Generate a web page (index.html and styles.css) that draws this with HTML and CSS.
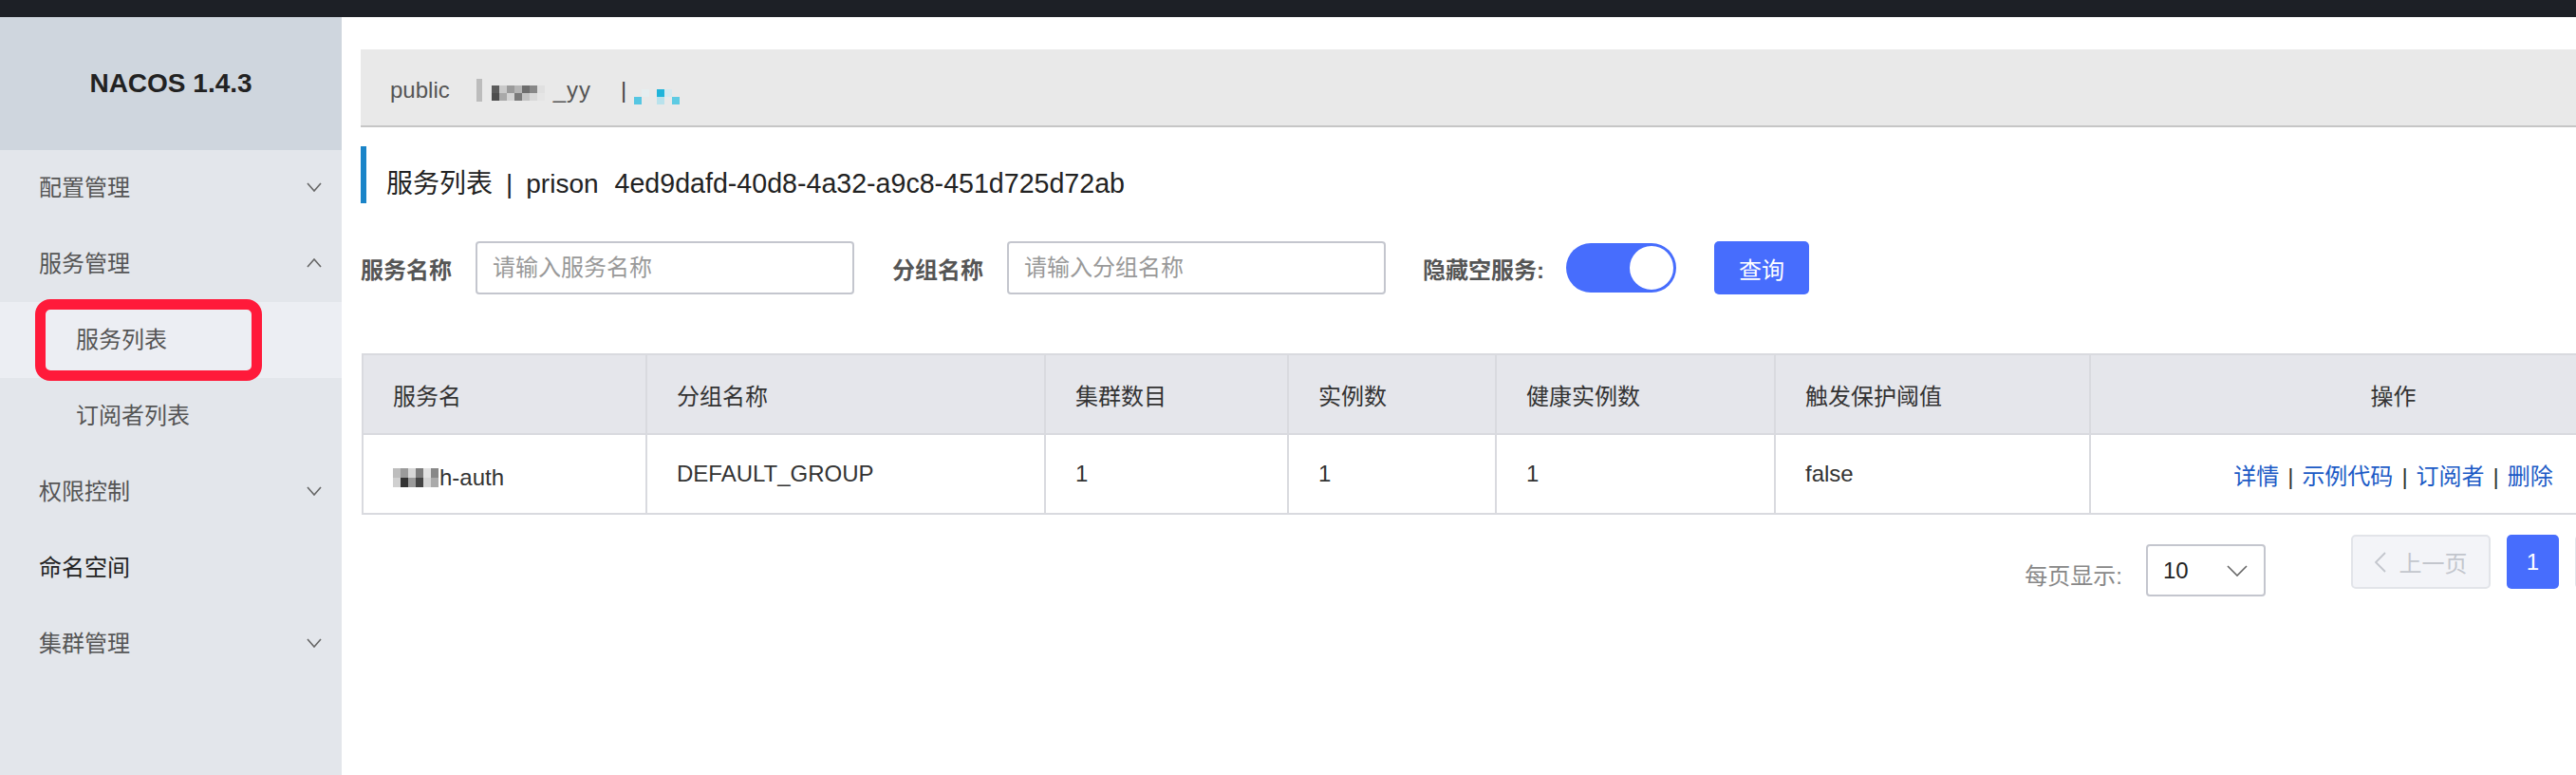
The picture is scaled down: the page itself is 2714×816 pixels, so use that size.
FILE: index.html
```html
<!DOCTYPE html>
<html lang="zh-CN">
<head>
    <meta charset="UTF-8">
    <title>Nacos - 服务列表</title>
    <link rel="stylesheet" href="styles.css">
</head>
<body>
    <div class="topbar"></div>

    <div class="layout">
        <!-- Sidebar -->
        <div class="sidebar">
            <div class="logo">NACOS 1.4.3</div>
            <div class="menu-item">配置管理
                <svg class="chev" width="16" height="10" viewBox="0 0 16 10"><path d="M1 1 L8 9 L15 1" fill="none" stroke="#666" stroke-width="1.6"/></svg>
            </div>
            <div class="menu-item">服务管理
                <svg class="chev" width="16" height="10" viewBox="0 0 16 10"><path d="M1 9 L8 1 L15 9" fill="none" stroke="#666" stroke-width="1.6"/></svg>
            </div>
            <div class="menu-item sub active">服务列表
                <div class="mark"></div>
            </div>
            <div class="menu-item sub">订阅者列表</div>
            <div class="menu-item">权限控制
                <svg class="chev" width="16" height="10" viewBox="0 0 16 10"><path d="M1 1 L8 9 L15 1" fill="none" stroke="#666" stroke-width="1.6"/></svg>
            </div>
            <div class="menu-item leaf">命名空间</div>
            <div class="menu-item">集群管理
                <svg class="chev" width="16" height="10" viewBox="0 0 16 10"><path d="M1 1 L8 9 L15 1" fill="none" stroke="#666" stroke-width="1.6"/></svg>
            </div>
        </div>

        <!-- Main -->
        <div class="main">
            <div class="content">
                <div class="crumbs">
                    <span>public</span>
                    <span class="blur">
                        <i class="pipe"></i>
                        <span class="pix">
                            <i style="background:#5c5c5c"></i><i style="background:#c9c9c9"></i><i style="background:#9a9a9a"></i><i style="background:#b5b5b5"></i><i style="background:#6d6d6d"></i><i style="background:#888"></i><i style="background:#e0e0e0"></i>
                            <i style="background:#4f4f4f"></i><i style="background:#a9a9a9"></i><i style="background:#d4d4d4"></i><i style="background:#7a7a7a"></i><i style="background:#c2c2c2"></i><i style="background:#d9d9d9"></i><i style="background:#e5e5e5"></i>
                        </span>
                        <span class="yy">_yy</span>
                    </span>
                    <span class="bar">|</span>
                    <span class="pix cyan">
                        <i style="background:#e9e9e9"></i><i style="background:#e6eef0"></i><i style="background:#e9e9e9"></i><i style="background:#1fb4da"></i><i style="background:#d5eaf0"></i><i style="background:#e9e9e9"></i>
                        <i style="background:#56c6e2"></i><i style="background:#e9e9e9"></i><i style="background:#e9e9e9"></i><i style="background:#b9e2ec"></i><i style="background:#e9e9e9"></i><i style="background:#5ecbe3"></i>
                    </span>
                </div>

                <h2 class="page-title">服务列表<span class="sep">|</span>prison<span class="ns">4ed9dafd-40d8-4a32-a9c8-451d725d72ab</span></h2>

                <div class="search">
                    <label class="field-label">服务名称</label>
                    <input class="field" placeholder="请输入服务名称">
                    <label class="field-label second">分组名称</label>
                    <input class="field" placeholder="请输入分组名称">
                    <label class="field-label third">隐藏空服务:</label>
                    <div class="switch"><div class="knob"></div></div>
                    <button class="btn-primary">查询</button>
                    <button class="btn-create" title="创建服务"></button>
                </div>

                <table class="services">
                    <colgroup>
                        <col style="width:299px">
                        <col style="width:420px">
                        <col style="width:256px">
                        <col style="width:219px">
                        <col style="width:294px">
                        <col style="width:332px">
                        <col>
                    </colgroup>
                    <thead>
                        <tr>
                            <th>服务名</th>
                            <th>分组名称</th>
                            <th>集群数目</th>
                            <th>实例数</th>
                            <th>健康实例数</th>
                            <th>触发保护阈值</th>
                            <th class="center">操作</th>
                        </tr>
                    </thead>
                    <tbody>
                        <tr>
                            <td>
                                <span class="svc">
                                    <span class="pix name">
                                        <i style="background:#bdbdbd"></i><i style="background:#9b9b9b"></i><i style="background:#d7d7d7"></i><i style="background:#7d7d7d"></i><i style="background:#e2e2e2"></i><i style="background:#888"></i>
                                        <i style="background:#d0d0d0"></i><i style="background:#333"></i><i style="background:#9a9a9a"></i><i style="background:#444"></i><i style="background:#d5d5d5"></i><i style="background:#aaa"></i>
                                    </span>h-auth
                                </span>
                            </td>
                            <td>DEFAULT_GROUP</td>
                            <td>1</td>
                            <td>1</td>
                            <td>1</td>
                            <td>false</td>
                            <td class="center actions">
                                <a>详情</a><span class="div">|</span><a>示例代码</a><span class="div">|</span><a>订阅者</a><span class="div">|</span><a>删除</a>
                            </td>
                        </tr>
                    </tbody>
                </table>

                <div class="pager">
                    <span class="page-size-label">每页显示:</span>
                    <div class="select">10
                        <svg width="22" height="12" viewBox="0 0 22 12"><path d="M1 1 L11 11 L21 1" fill="none" stroke="#666" stroke-width="1.6"/></svg>
                    </div>
                    <button class="page-btn prev">
                        <svg width="12" height="22" viewBox="0 0 12 22"><path d="M11 1 L1 11 L11 21" fill="none" stroke="#c3c6cd" stroke-width="1.8"/></svg>
                        上一页
                    </button>
                    <button class="page-btn current">1</button>
                    <button class="page-btn next" title="下一页"></button>
                </div>
            </div>
        </div>
    </div>
</body>
</html>
```

FILE: styles.css
```css
html, body {
    margin: 0;
    padding: 0;
    overflow: hidden;
}

body {
    width: 2714px;
    height: 816px;
    font-family: "Liberation Sans", "Noto Sans CJK SC", sans-serif;
    color: #333;
    background: #fff;
}

.topbar {
    height: 18px;
    background: #1d2026;
}

.layout {
    display: flex;
    height: 798px;
    overflow: hidden;
}

/* Sidebar */
.sidebar {
    width: 360px;
    flex: none;
    background: #e3e6eb;
}

.logo {
    height: 140px;
    background: #cfd6de;
    display: flex;
    align-items: center;
    justify-content: center;
    font-size: 28px;
    font-weight: bold;
    color: #222;
}

.menu-item {
    position: relative;
    height: 80px;
    box-sizing: border-box;
    display: flex;
    align-items: center;
    padding: 0 21px 6px 41px;
    font-size: 24px;
    color: #555;
}

.menu-item .chev {
    margin-left: auto;
    margin-top: 4px;
}

.menu-item.sub {
    padding-left: 80px;
}

.menu-item.leaf {
    color: #222;
}

.menu-item.active {
    background: #eceef3;
}

.mark {
    position: absolute;
    left: 37px;
    top: -3px;
    width: 239px;
    height: 86px;
    box-sizing: border-box;
    border: 11px solid #ff1a3a;
    border-radius: 16px;
}

/* Main */
.main {
    flex: none;
    width: 2500px;
    padding: 34px 0 0 20px;
}

.content {
    width: 2462px;
}

.crumbs {
    height: 82px;
    box-sizing: border-box;
    padding: 6px 0 0 31px;
    background: #e9e9e9;
    border-bottom: 2px solid #c6c6c6;
    display: flex;
    align-items: center;
    font-size: 24px;
    color: #555;
}

.blur {
    display: flex;
    align-items: center;
    margin-left: 28px;
}

.blur .pipe {
    display: block;
    width: 6px;
    height: 24px;
    background: #bcbcbc;
    margin-right: 10px;
}

.blur .yy {
    margin-left: 9px;
    letter-spacing: 1px;
}

.pix {
    display: inline-grid;
    grid-template-columns: repeat(7, 8px);
    grid-auto-rows: 8px;
}

.pix i {
    display: block;
}

.crumbs .pix {
    margin-top: 6px;
}

.pix.cyan {
    grid-template-columns: repeat(6, 8px);
    margin-top: 14px;
}

.crumbs .bar {
    margin: 0 8px 0 31px;
    color: #444;
}

.page-title {
    margin: 20px 0 0;
    height: 42px;
    padding-top: 18px;
    line-height: 42px;
    border-left: 6px solid #1a84c8;
    padding-left: 21px;
    font-size: 28px;
    font-weight: normal;
    color: #222;
}

.page-title .sep {
    margin: 0 14px;
}

.page-title .ns {
    margin-left: 17px;
    font-size: 28.6px;
}

.search {
    margin-top: 40px;
    display: flex;
    align-items: center;
    height: 56px;
}

.field-label {
    font-size: 24px;
    font-weight: bold;
    color: #555;
    margin-right: 25px;
}

.field-label.second {
    margin-left: 40px;
}

.field-label.third {
    margin-left: 39px;
    margin-right: 23px;
}

.field {
    width: 399px;
    height: 56px;
    box-sizing: border-box;
    border: 2px solid #c4c6ce;
    border-radius: 4px;
    padding: 0 16px;
    font-family: inherit;
    font-size: 24px;
    color: #333;
}

.field::placeholder {
    color: #999;
}

.switch {
    width: 116px;
    height: 52px;
    border-radius: 26px;
    background: #476dfd;
    position: relative;
}

.knob {
    position: absolute;
    right: 1px;
    top: 1px;
    width: 50px;
    height: 50px;
    box-sizing: border-box;
    border-radius: 50%;
    background: #fff;
    border: 2px solid #476dfd;
}

.btn-primary {
    margin-left: 40px;
    width: 100px;
    height: 56px;
    border: none;
    border-radius: 5px;
    background: #476dfd;
    color: #fff;
    font-family: inherit;
    font-size: 24px;
}

.btn-create {
    margin-left: auto;
    margin-right: -142px;
    width: 146px;
    height: 56px;
    border: none;
    border-radius: 5px;
    background: #476dfd;
}

/* Table */
.services {
    margin-top: 62px;
    margin-left: 1px;
    width: 2461px;
    border-collapse: collapse;
    table-layout: fixed;
    font-size: 24px;
    color: #333;
}

.services th,
.services td {
    border: 2px solid #d9dadf;
    height: 82px;
    padding: 0 0 0 31px;
    text-align: left;
    font-weight: normal;
}

.services th {
    background: #e5e6eb;
}

.services .center {
    text-align: center;
    padding-left: 0;
}

.svc {
    display: inline-flex;
    align-items: center;
}

.pix.name {
    grid-template-columns: repeat(6, 8px);
    grid-auto-rows: 10px;
    margin-right: 1px;
}

.actions a {
    color: #1c5bc6;
}

.actions .div {
    margin: 0 9px;
    color: #333;
}

/* Pager */
.pager {
    margin-top: 21px;
    display: flex;
    align-items: flex-start;
    justify-content: flex-end;
    margin-right: -18px;
    font-size: 24px;
}

.page-size-label {
    color: #888;
    margin-top: 24px;
}

.select {
    margin: 10px 0 0 25px;
    width: 126px;
    height: 55px;
    box-sizing: border-box;
    border: 2px solid #c4c6ce;
    border-radius: 4px;
    display: flex;
    align-items: center;
    padding: 0 17px 0 16px;
    justify-content: space-between;
    color: #222;
}

.page-btn {
    height: 57px;
    border-radius: 5px;
    font-family: inherit;
    font-size: 24px;
    display: flex;
    align-items: center;
    justify-content: center;
    gap: 14px;
}

.page-btn.prev,
.page-btn.next {
    width: 147px;
    background: #f3f4f8;
    border: 2px solid #e2e4e9;
    color: #c3c6cd;
}

.page-btn.prev {
    margin-left: 90px;
}

.page-btn.current {
    width: 55px;
    margin-left: 17px;
    border: none;
    background: #476dfd;
    color: #fff;
}

.page-btn.next {
    margin-left: 17px;
}
```
